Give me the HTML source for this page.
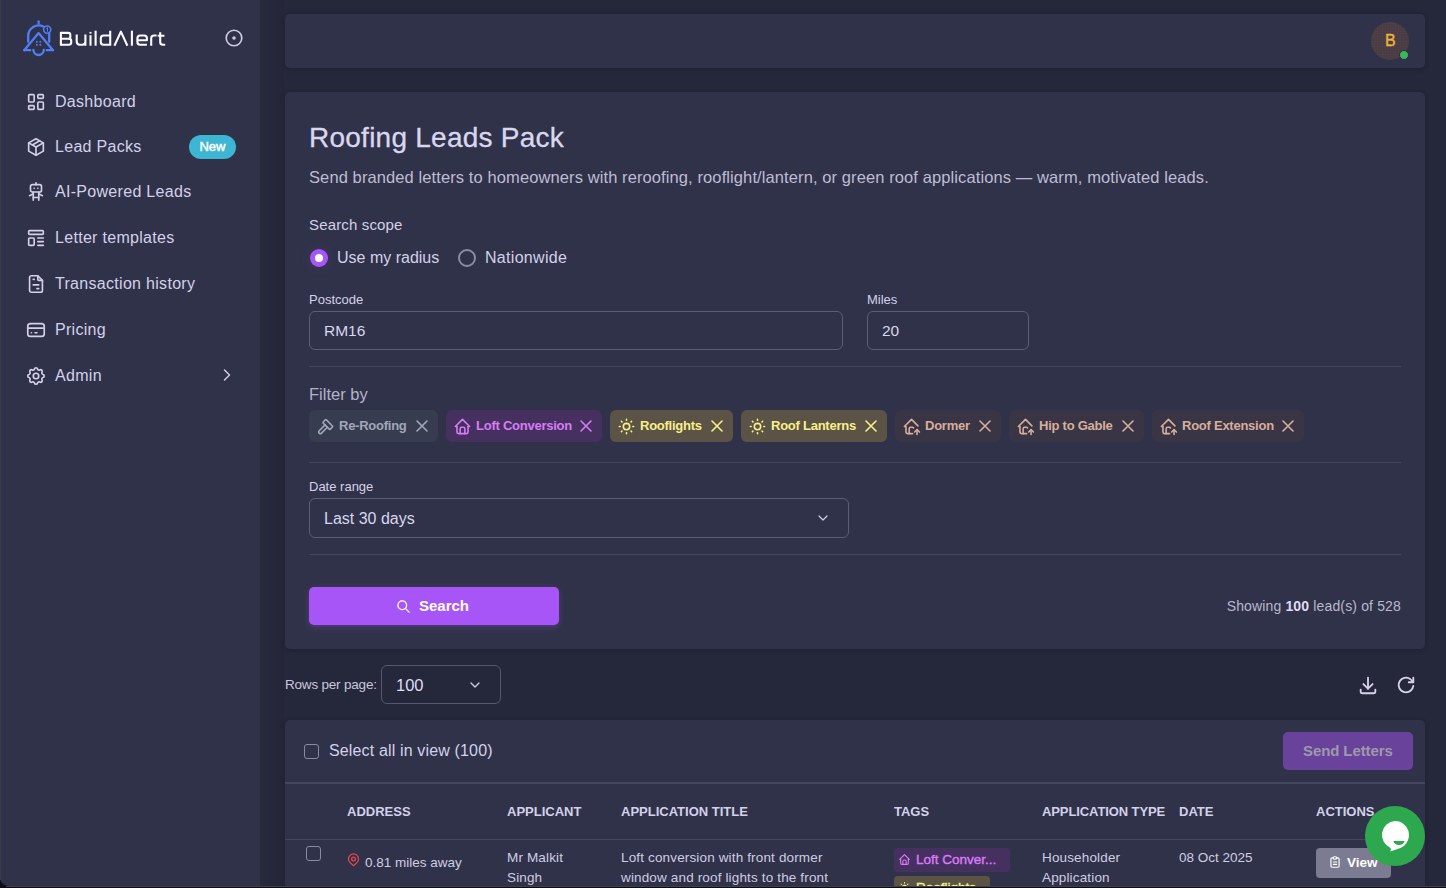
<!DOCTYPE html>
<html><head><meta charset="utf-8">
<style>
*{box-sizing:border-box;margin:0;padding:0}
html,body{width:1446px;height:888px;overflow:hidden;background:#0e0e12}
body{font-family:"Liberation Sans",sans-serif;color:#cfcde4;position:relative}
.abs{position:absolute}
#app{position:absolute;left:0;top:0;width:1446px;height:886px;background:#25273a;border-bottom-left-radius:8px;overflow:hidden}
#side{position:absolute;left:0;top:0;width:260px;height:886px;background:#303249;border-bottom-left-radius:10px}
#sideshadow{position:absolute;left:260px;top:0;width:24px;height:886px;background:linear-gradient(90deg,rgba(255,255,255,0.012),rgba(0,0,0,0.03))}
.card{position:absolute;background:#303249;border-radius:5px;box-shadow:0 1px 5px rgba(10,12,24,0.22)}
.nav{position:absolute;left:25px;height:24px;display:flex;align-items:center;font-size:16px;color:#d3d1ea;white-space:nowrap;letter-spacing:0.3px}
.nav svg{width:22px;height:22px;margin-right:8px;flex:none}
svg.i{fill:none;stroke:currentColor;stroke-width:1.8;stroke-linecap:round;stroke-linejoin:round}
.t{position:absolute;white-space:nowrap;line-height:1}
.box{position:absolute;border:1px solid #5b5e75;border-radius:6px}
.div{position:absolute;height:1px;background:#45485e}
.chip{position:absolute;top:410px;height:32px;border-radius:6px;font-size:13px;font-weight:700;white-space:nowrap}
.chip svg.ic{position:absolute;left:6.5px;top:6.5px;width:19px;height:19px}
.chip .lb{position:absolute;left:30px;top:9px;line-height:1;letter-spacing:-0.25px}
.chip svg.x{position:absolute;right:10px;top:10px;width:12px;height:12px}
</style></head><body>
<div id="app">
  <div id="side">
    <!-- logo icon -->
    <svg class="abs" style="left:18px;top:16px" width="40" height="44" viewBox="0 0 40 44" fill="none" stroke="#4f7ef6" stroke-width="2.3" stroke-linecap="round" stroke-linejoin="round">
      <path d="M20.6 5.3v2.2"/>
      <path d="M10.2 25.8V19.8a10.4 10.4 0 0 1 15.2 -9.2"/>
      <path d="M31.2 17.6V25.8"/>
      <path d="M6.2 34.2L20.6 17.1L35 34.2"/>
      <path d="M6.2 34.2h6M28.6 34.2h6.4"/>
      <path d="M15.4 33.8a5.2 5.2 0 0 0 10.4 0"/>
      <circle cx="29.2" cy="13.6" r="3.6" stroke-width="1.6"/>
      <path d="M28.7 12.2l0.8 -0.5v3.6" stroke-width="1"/>
      <g fill="#4f7ef6" stroke="none"><rect x="18" y="25" width="1.7" height="1.7"/><rect x="21.5" y="25" width="1.7" height="1.7"/><rect x="18" y="28" width="1.7" height="1.7"/><rect x="21.5" y="28" width="1.7" height="1.7"/></g>
    </svg>
    <!-- logo text -->
    <svg class="abs" style="left:56px;top:26px" width="114" height="26" viewBox="0 0 114 26" fill="none" stroke="#fafaff" stroke-width="2.1" stroke-linecap="butt" stroke-linejoin="round">
      <path d="M4.9 5.9V19.7"/>
      <path d="M4.9 6.9H12.3Q14.3 6.9 14.3 8.9V10.9Q14.3 12.8 12.3 12.8H4.9"/>
      <path d="M12.3 12.8H13Q15.2 12.8 15.2 15V16.6Q15.2 18.7 13 18.7H4.9"/>
      <path d="M20.7 8.5V15.6Q20.7 18.7 23.8 18.7H26.4Q29.4 18.7 29.4 15.6V8.5M29.4 15.6V19.7"/>
      <path d="M34.5 9.2V19.7"/>
      <path d="M34.5 5.9V7.6" stroke-width="2"/>
      <path d="M39.6 4.7V19.7"/>
      <path d="M54.2 4.7V19.7M54.2 9.5H47.6Q44.8 9.5 44.8 12.3V15.9Q44.8 18.7 47.6 18.7H54.2"/>
      <path d="M58.4 19.7L64.9 5.6L71.4 19.7"/>
      <path d="M75.9 4.7V19.7"/>
      <path d="M90.9 18.7H84.2Q81.4 18.7 81.4 15.9V12.3Q81.4 9.5 84.2 9.5H88.1Q90.9 9.5 90.9 12.3V14.2H81.4"/>
      <path d="M95.2 19.7V12.3Q95.2 9.5 98 9.5H100.6"/>
      <path d="M104.2 6.2V15.9Q104.2 18.7 107 18.7H109.2M101.7 9.7H108.4"/>
    </svg>
    <svg class="i abs" style="left:223px;top:27px;color:#cfcde4" width="22" height="22" viewBox="0 0 24 24"><circle cx="12" cy="12" r="8.5"/><circle cx="12" cy="12" r="1" fill="currentColor"/></svg>

    <div class="nav" style="top:90px"><svg class="i" viewBox="0 0 24 24"><path d="M5 4h4a1 1 0 0 1 1 1v6a1 1 0 0 1 -1 1h-4a1 1 0 0 1 -1 -1v-6a1 1 0 0 1 1 -1"/><path d="M5 16h4a1 1 0 0 1 1 1v2a1 1 0 0 1 -1 1h-4a1 1 0 0 1 -1 -1v-2a1 1 0 0 1 1 -1"/><path d="M15 12h4a1 1 0 0 1 1 1v6a1 1 0 0 1 -1 1h-4a1 1 0 0 1 -1 -1v-6a1 1 0 0 1 1 -1"/><path d="M15 4h4a1 1 0 0 1 1 1v2a1 1 0 0 1 -1 1h-4a1 1 0 0 1 -1 -1v-2a1 1 0 0 1 1 -1"/></svg>Dashboard</div>
    <div class="nav" style="top:135px"><svg class="i" viewBox="0 0 24 24"><path d="M12 3l8 4.5l0 9l-8 4.5l-8 -4.5l0 -9l8 -4.5"/><path d="M12 12l8 -4.5"/><path d="M12 12l0 9"/><path d="M12 12l-8 -4.5"/><path d="M16 5.25l-8 4.5"/></svg>Lead Packs</div>
    <div class="abs" style="left:189px;top:135px;width:47px;height:24px;border-radius:12px;background:#3cb6d2;color:#fff;font-size:13px;line-height:23px;text-align:center;-webkit-text-stroke:0.45px #fff">New</div>
    <div class="nav" style="top:180px"><svg class="i" viewBox="0 0 24 24"><path d="M6 6a2 2 0 0 1 2 -2h8a2 2 0 0 1 2 2v4a2 2 0 0 1 -2 2h-8a2 2 0 0 1 -2 -2z"/><path d="M12 2v2"/><path d="M9 12v9"/><path d="M15 12v9"/><path d="M5 16l4 -2"/><path d="M15 14l4 2"/><path d="M9 18h6"/><path d="M10 8v.01"/><path d="M14 8v.01"/></svg>AI-Powered Leads</div>
    <div class="nav" style="top:226px"><svg class="i" viewBox="0 0 24 24"><path d="M4 5a1 1 0 0 1 1 -1h14a1 1 0 0 1 1 1v2a1 1 0 0 1 -1 1h-14a1 1 0 0 1 -1 -1z"/><path d="M4 13a1 1 0 0 1 1 -1h4a1 1 0 0 1 1 1v6a1 1 0 0 1 -1 1h-4a1 1 0 0 1 -1 -1z"/><path d="M14 12l6 0"/><path d="M14 16l6 0"/><path d="M14 20l6 0"/></svg>Letter templates</div>
    <div class="nav" style="top:272px"><svg class="i" viewBox="0 0 24 24"><path d="M14 3v4a1 1 0 0 0 1 1h4"/><path d="M17 21h-10a2 2 0 0 1 -2 -2v-14a2 2 0 0 1 2 -2h7l5 5v11a2 2 0 0 1 -2 2z"/><path d="M9 7l1 0"/><path d="M9 13l6 0"/><path d="M13 17l2 0"/></svg>Transaction history</div>
    <div class="nav" style="top:318px"><svg class="i" viewBox="0 0 24 24"><path d="M3 8a3 3 0 0 1 3 -3h12a3 3 0 0 1 3 3v8a3 3 0 0 1 -3 3h-12a3 3 0 0 1 -3 -3z"/><path d="M3 10l18 0"/><path d="M7 15l.01 0"/><path d="M11 15l2 0"/></svg>Pricing</div>
    <div class="nav" style="top:364px"><svg class="i" viewBox="0 0 24 24"><path d="M10.325 4.317c.426 -1.756 2.924 -1.756 3.35 0a1.724 1.724 0 0 0 2.573 1.066c1.543 -.94 3.31 .826 2.37 2.37a1.724 1.724 0 0 0 1.065 2.572c1.756 .426 1.756 2.924 0 3.35a1.724 1.724 0 0 0 -1.066 2.573c.94 1.543 -.826 3.31 -2.37 2.37a1.724 1.724 0 0 0 -2.572 1.065c-.426 1.756 -2.924 1.756 -3.35 0a1.724 1.724 0 0 0 -2.573 -1.066c-1.543 .94 -3.31 -.826 -2.37 -2.37a1.724 1.724 0 0 0 -1.065 -2.572c-1.756 -.426 -1.756 -2.924 0 -3.35a1.724 1.724 0 0 0 1.066 -2.573c-.94 -1.543 .826 -3.31 2.37 -2.37c1 .608 2.296 .07 2.572 -1.065z"/><path d="M9 12a3 3 0 1 0 6 0a3 3 0 0 0 -6 0"/></svg>Admin</div>
    <svg class="i abs" style="left:216.5px;top:365px;color:#cfcde4" width="20" height="20" viewBox="0 0 24 24"><path d="M9 6l6 6l-6 6"/></svg>
  </div>
  <div id="sideshadow"></div>

  <!-- header -->
  <div class="card" style="left:285px;top:14px;width:1140px;height:54px">
    <div class="abs" style="left:1086px;top:8px;width:38px;height:38px;border-radius:50%;background-color:#4a3c45;background-image:radial-gradient(circle,rgba(190,150,70,0.12) 0.5px,transparent 0.9px);background-size:2.6px 2.6px"></div>
    <div class="t" style="left:1100px;top:19px;font-size:16px;color:#e9b43c;-webkit-text-stroke:0.35px #e9b43c">B</div>
    <div class="abs" style="left:1113.5px;top:35.5px;width:10px;height:10px;border-radius:50%;background:#3cb85c;border:1.5px solid #2a2c40"></div>
  </div>

  <!-- main card -->
  <div class="card" style="left:285px;top:92px;width:1140px;height:557px"></div>
  <div class="t" style="left:309px;top:124px;font-size:28px;color:#d9d7ef;letter-spacing:0.25px;-webkit-text-stroke:0.3px #d9d7ef">Roofing Leads Pack</div>
  <div class="t" style="left:309px;top:169px;font-size:16.5px;color:#bebcd4;letter-spacing:0.1px">Send branded letters to homeowners with reroofing, rooflight/lantern, or green roof applications — warm, motivated leads.</div>

  <div class="t" style="left:309px;top:217px;font-size:15px;color:#d3d1e9;letter-spacing:0.15px">Search scope</div>
  <div class="abs" style="left:310px;top:249px;width:18px;height:18px;border-radius:50%;background:#a855f7;box-shadow:0 0 7px 4px rgba(120,70,190,0.10)"></div>
  <div class="abs" style="left:315px;top:254px;width:8px;height:8px;border-radius:50%;background:#fff"></div>
  <div class="t" style="left:337px;top:249.5px;font-size:16px;color:#d3d1e9">Use my radius</div>
  <div class="abs" style="left:458px;top:249px;width:18px;height:18px;border-radius:50%;border:2px solid #8c8ba0"></div>
  <div class="t" style="left:485px;top:249.5px;font-size:16px;color:#d3d1e9;letter-spacing:0.3px">Nationwide</div>

  <div class="t" style="left:309px;top:293px;font-size:13px;color:#d3d1e9">Postcode</div>
  <div class="box" style="left:309px;top:311px;width:534px;height:39px"></div>
  <div class="t" style="left:324px;top:323px;font-size:15.5px;color:#d8d6ee">RM16</div>
  <div class="t" style="left:867px;top:293px;font-size:13px;color:#d3d1e9">Miles</div>
  <div class="box" style="left:867px;top:311px;width:162px;height:39px"></div>
  <div class="t" style="left:882px;top:323px;font-size:15.5px;color:#d8d6ee">20</div>

  <div class="div" style="left:309px;top:366px;width:1092px"></div>
  <div class="t" style="left:309px;top:386px;font-size:16.5px;color:#b3b2c9">Filter by</div>

  <!-- chips -->
  <div class="chip" style="left:309px;width:129px;background:#383c50;color:#a1a7b8">
    <svg class="ic i" viewBox="0 0 24 24" style="stroke-width:2"><path d="M11.414 10l-7.383 7.418a2.091 2.091 0 0 0 0 2.967a2.11 2.11 0 0 0 2.976 0l7.407 -7.385"/><path d="M18.121 15.293l2.586 -2.586a1 1 0 0 0 0 -1.414l-7.586 -7.586a1 1 0 0 0 -1.414 0l-2.586 2.586a1 1 0 0 0 0 1.414l7.586 7.586a1 1 0 0 0 1.414 0z"/></svg>
    <span class="lb">Re-Roofing</span>
    <svg class="x i" viewBox="0 0 12 12" style="stroke-width:1.6"><path d="M1 1l10 10M11 1L1 11"/></svg>
  </div>
  <div class="chip" style="left:446px;width:156px;background:#46305f;color:#d77cf6">
    <svg class="ic i" viewBox="0 0 24 24" style="stroke-width:2"><path d="M5 12l-2 0l9 -9l9 9l-2 0"/><path d="M5 12v7a2 2 0 0 0 2 2h10a2 2 0 0 0 2 -2v-7"/><path d="M9 21v-6a2 2 0 0 1 2 -2h2a2 2 0 0 1 2 2v6"/></svg>
    <span class="lb">Loft Conversion</span>
    <svg class="x i" viewBox="0 0 12 12" style="stroke-width:1.6"><path d="M1 1l10 10M11 1L1 11"/></svg>
  </div>
  <div class="chip" style="left:610px;width:123px;background:#5b5446;color:#f9ef8a">
    <svg class="ic i" viewBox="0 0 24 24" style="stroke-width:2"><path d="M12 12m-4 0a4 4 0 1 0 8 0a4 4 0 1 0 -8 0"/><path d="M3 12h1m8 -9v1m8 8h1m-9 8v1m-6.4 -15.4l.7 .7m12.1 -.7l-.7 .7m0 11.4l.7 .7m-12.1 -.7l-.7 .7"/></svg>
    <span class="lb">Rooflights</span>
    <svg class="x i" viewBox="0 0 12 12" style="stroke-width:1.6"><path d="M1 1l10 10M11 1L1 11"/></svg>
  </div>
  <div class="chip" style="left:741px;width:146px;background:#5b5446;color:#f9ef8a">
    <svg class="ic i" viewBox="0 0 24 24" style="stroke-width:2"><path d="M12 12m-4 0a4 4 0 1 0 8 0a4 4 0 1 0 -8 0"/><path d="M3 12h1m8 -9v1m8 8h1m-9 8v1m-6.4 -15.4l.7 .7m12.1 -.7l-.7 .7m0 11.4l.7 .7m-12.1 -.7l-.7 .7"/></svg>
    <span class="lb">Roof Lanterns</span>
    <svg class="x i" viewBox="0 0 12 12" style="stroke-width:1.6"><path d="M1 1l10 10M11 1L1 11"/></svg>
  </div>
  <div class="chip" style="left:895px;width:106px;background:#3a3545;color:#d6ae9c">
    <svg class="ic i" viewBox="0 0 24 24" style="stroke-width:2"><path d="M9 21v-6a2 2 0 0 1 2 -2h2c.641 0 1.212 .302 1.578 .771"/><path d="M20.136 11.136l-8.136 -8.136l-9 9h2v7a2 2 0 0 0 2 2h6.344"/><path d="M19 22v-6"/><path d="M22 19l-3 -3l-3 3"/></svg>
    <span class="lb">Dormer</span>
    <svg class="x i" viewBox="0 0 12 12" style="stroke-width:1.6"><path d="M1 1l10 10M11 1L1 11"/></svg>
  </div>
  <div class="chip" style="left:1009px;width:135px;background:#3a3545;color:#d6ae9c">
    <svg class="ic i" viewBox="0 0 24 24" style="stroke-width:2"><path d="M9 21v-6a2 2 0 0 1 2 -2h2c.641 0 1.212 .302 1.578 .771"/><path d="M20.136 11.136l-8.136 -8.136l-9 9h2v7a2 2 0 0 0 2 2h6.344"/><path d="M19 22v-6"/><path d="M22 19l-3 -3l-3 3"/></svg>
    <span class="lb">Hip to Gable</span>
    <svg class="x i" viewBox="0 0 12 12" style="stroke-width:1.6"><path d="M1 1l10 10M11 1L1 11"/></svg>
  </div>
  <div class="chip" style="left:1152px;width:152px;background:#3a3545;color:#d6ae9c">
    <svg class="ic i" viewBox="0 0 24 24" style="stroke-width:2"><path d="M9 21v-6a2 2 0 0 1 2 -2h2c.641 0 1.212 .302 1.578 .771"/><path d="M20.136 11.136l-8.136 -8.136l-9 9h2v7a2 2 0 0 0 2 2h6.344"/><path d="M19 22v-6"/><path d="M22 19l-3 -3l-3 3"/></svg>
    <span class="lb">Roof Extension</span>
    <svg class="x i" viewBox="0 0 12 12" style="stroke-width:1.6"><path d="M1 1l10 10M11 1L1 11"/></svg>
  </div>

  <div class="div" style="left:309px;top:462px;width:1092px"></div>
  <div class="t" style="left:309px;top:480px;font-size:13px;color:#d3d1e9">Date range</div>
  <div class="box" style="left:309px;top:498px;width:540px;height:40px"></div>
  <div class="t" style="left:324px;top:511px;font-size:16px;color:#d8d6ee">Last 30 days</div>
  <svg class="i abs" style="left:815px;top:510px;color:#cfcde4" width="16" height="16" viewBox="0 0 24 24"><path d="M6 9l6 6l6 -6"/></svg>
  <div class="div" style="left:309px;top:554px;width:1092px"></div>

  <div class="abs" style="left:309px;top:587px;width:250px;height:38px;border-radius:5px;background:#a855f7;box-shadow:0 2px 6px rgba(168,85,247,0.3)"></div>
  <svg class="i abs" style="left:395.5px;top:598.5px;color:#fff;stroke-width:2.1" width="15" height="15" viewBox="0 0 24 24"><path d="M10 10m-7 0a7 7 0 1 0 14 0a7 7 0 1 0 -14 0"/><path d="M21 21l-6 -6"/></svg>
  <div class="t" style="left:419px;top:598px;font-size:15px;font-weight:700;color:#fff">Search</div>
  <div class="t" style="right:45px;top:599px;font-size:14px;color:#b9b8cf;letter-spacing:0.15px">Showing <b style="color:#dedcf2">100</b> lead(s) of 528</div>

  <!-- rows per page -->
  <div class="t" style="left:285px;top:678px;font-size:13.5px;color:#c9c8de;letter-spacing:-0.2px">Rows per page:</div>
  <div class="box" style="left:381px;top:665px;width:120px;height:39px;border-color:#55586e"></div>
  <div class="t" style="left:396px;top:677px;font-size:16.5px;color:#dedcf2">100</div>
  <svg class="i abs" style="left:467px;top:677px;color:#cfcde4;stroke-width:2" width="16" height="16" viewBox="0 0 24 24"><path d="M6 9l6 6l6 -6"/></svg>
  <svg class="i abs" style="left:1357px;top:674px;color:#d6d4ec;stroke-width:2" width="22" height="22" viewBox="0 0 24 24"><path d="M4 17v2a2 2 0 0 0 2 2h12a2 2 0 0 0 2 -2v-2"/><path d="M7 11l5 5l5 -5"/><path d="M12 4l0 12"/></svg>
  <svg class="i abs" style="left:1395px;top:674px;color:#d6d4ec;stroke-width:2" width="22" height="22" viewBox="0 0 24 24"><path d="M19.933 13.041a8 8 0 1 1 -9.925 -8.788c3.899 -1 7.935 1.007 9.425 4.747"/><path d="M20 4v5h-5"/></svg>

  <!-- table card -->
  <div class="card" style="left:285px;top:720px;width:1140px;height:200px"></div>
  <div class="abs" style="left:303.5px;top:743.5px;width:15px;height:15px;border-radius:3px;border:1.5px solid #8a8aa0"></div>
  <div class="t" style="left:329px;top:743px;font-size:16px;color:#d3d1e9;letter-spacing:0.15px">Select all in view (100)</div>
  <div class="abs" style="left:1283px;top:732px;width:130px;height:38px;border-radius:5px;background:#68429b"></div>
  <div class="t" style="left:1303px;top:743px;font-size:15px;font-weight:700;color:#9d9aab;letter-spacing:-0.1px">Send Letters</div>
  <div class="abs" style="left:285px;top:782px;width:1140px;height:2px;background:#44475d"></div>
    <div class="t" style="left:347px;top:805px;font-size:13px;font-weight:700;color:#d3d1e9">ADDRESS</div>
  <div class="t" style="left:507px;top:805px;font-size:13px;font-weight:700;color:#d3d1e9">APPLICANT</div>
  <div class="t" style="left:621px;top:805px;font-size:13px;font-weight:700;color:#d3d1e9">APPLICATION TITLE</div>
  <div class="t" style="left:894px;top:805px;font-size:13px;font-weight:700;color:#d3d1e9">TAGS</div>
  <div class="t" style="left:1042px;top:805px;font-size:13px;font-weight:700;color:#d3d1e9;letter-spacing:-0.1px">APPLICATION TYPE</div>
  <div class="t" style="left:1179px;top:805px;font-size:13px;font-weight:700;color:#d3d1e9">DATE</div>
  <div class="t" style="left:1316px;top:805px;font-size:13px;font-weight:700;color:#d3d1e9">ACTIONS</div>
  <div class="abs" style="left:285px;top:839px;width:1140px;height:1px;background:#44475d"></div>

  <div class="abs" style="left:306px;top:846px;width:15px;height:15px;border-radius:3px;border:1.5px solid #8a8aa0"></div>
  <svg class="i abs" style="left:346px;top:852px;color:#e5484d;stroke-width:2" width="15" height="15" viewBox="0 0 24 24"><path d="M9 11a3 3 0 1 0 6 0a3 3 0 0 0 -6 0"/><path d="M17.657 16.657l-4.243 4.243a2 2 0 0 1 -2.827 0l-4.244 -4.243a8 8 0 1 1 11.314 0z"/></svg>
  <div class="t" style="left:365px;top:856px;font-size:13.5px;color:#cfcde4">0.81 miles away</div>
  <div class="t" style="left:507px;top:852px;font-size:13.5px;color:#cfcde4;line-height:20px;white-space:normal;width:100px;margin-top:-4px;letter-spacing:0.15px">Mr Malkit<br>Singh</div>
  <div class="t" style="left:621px;top:852px;font-size:13.5px;color:#cfcde4;line-height:20px;margin-top:-4px;letter-spacing:0.15px">Loft conversion with front dormer<br>window and roof lights to the front</div>
  <div class="abs" style="left:894px;top:848px;width:116px;height:24px;border-radius:4px;background:#46305f"></div>
  <svg class="i abs" style="left:898px;top:853px;color:#d77cf6;stroke-width:2" width="13" height="13" viewBox="0 0 24 24"><path d="M5 12l-2 0l9 -9l9 9l-2 0"/><path d="M5 12v7a2 2 0 0 0 2 2h10a2 2 0 0 0 2 -2v-7"/><path d="M9 21v-6a2 2 0 0 1 2 -2h2a2 2 0 0 1 2 2v6"/></svg>
  <div class="t" style="left:916px;top:853px;font-size:13.5px;color:#d77cf6;-webkit-text-stroke:0.4px #d77cf6">Loft Conver...</div>
  <div class="abs" style="left:894px;top:876px;width:96px;height:23px;border-radius:4px;background:#5b5446"></div>
  <svg class="i abs" style="left:898px;top:881px;color:#f9ef8a;stroke-width:2" width="13" height="13" viewBox="0 0 24 24"><path d="M12 12m-4 0a4 4 0 1 0 8 0a4 4 0 1 0 -8 0"/><path d="M3 12h1m8 -9v1m8 8h1m-9 8v1m-6.4 -15.4l.7 .7m12.1 -.7l-.7 .7m0 11.4l.7 .7m-12.1 -.7l-.7 .7"/></svg>
  <div class="t" style="left:916px;top:881px;font-size:13.5px;color:#f9ef8a;-webkit-text-stroke:0.4px #f9ef8a">Rooflights</div>
  <div class="t" style="left:1042px;top:852px;font-size:13.5px;color:#cfcde4;line-height:20px;margin-top:-4px;letter-spacing:0.15px">Householder<br>Application</div>
  <div class="t" style="left:1179px;top:851px;font-size:13.5px;color:#cfcde4">08 Oct 2025</div>
  <div class="abs" style="left:1316px;top:848px;width:75px;height:30px;border-radius:4px;background:#7b7c91"></div>
  <svg class="i abs" style="left:1328px;top:855px;color:#fff;stroke-width:2" width="14" height="14" viewBox="0 0 24 24"><path d="M9 5h-2a2 2 0 0 0 -2 2v12a2 2 0 0 0 2 2h10a2 2 0 0 0 2 -2v-12a2 2 0 0 0 -2 -2h-2"/><path d="M9 5a2 2 0 0 1 2 -2h2a2 2 0 0 1 2 2v0a2 2 0 0 1 -2 2h-2a2 2 0 0 1 -2 -2z"/><path d="M9 12h6"/><path d="M9 16h6"/></svg>
  <div class="t" style="left:1347px;top:856px;font-size:13.5px;font-weight:700;color:#fff">View</div>

  <!-- chat bubble -->
  <div class="abs" style="left:1365px;top:806px;width:60px;height:60px;border-radius:50%;background:#2ea84f"></div>
  <svg class="abs" style="left:1375px;top:816px" width="40" height="40" viewBox="0 0 40 40"><path d="M20 5A14 14 0 0 1 24 32.4Q19.5 33.8 15.2 35.6Q16.4 33.6 15.6 31.9A14 14 0 0 1 20 5z" fill="#fff"/><path d="M18.5 25h11a5.5 4 0 0 1 -11 0z" fill="#2ea84f"/></svg>
</div>
<div class="abs" style="left:0;top:0;width:1px;height:880px;background:#3c3c40"></div>
<div class="abs" style="left:6px;top:886px;width:1440px;height:1px;background:#3f4046"></div>
</body></html>
